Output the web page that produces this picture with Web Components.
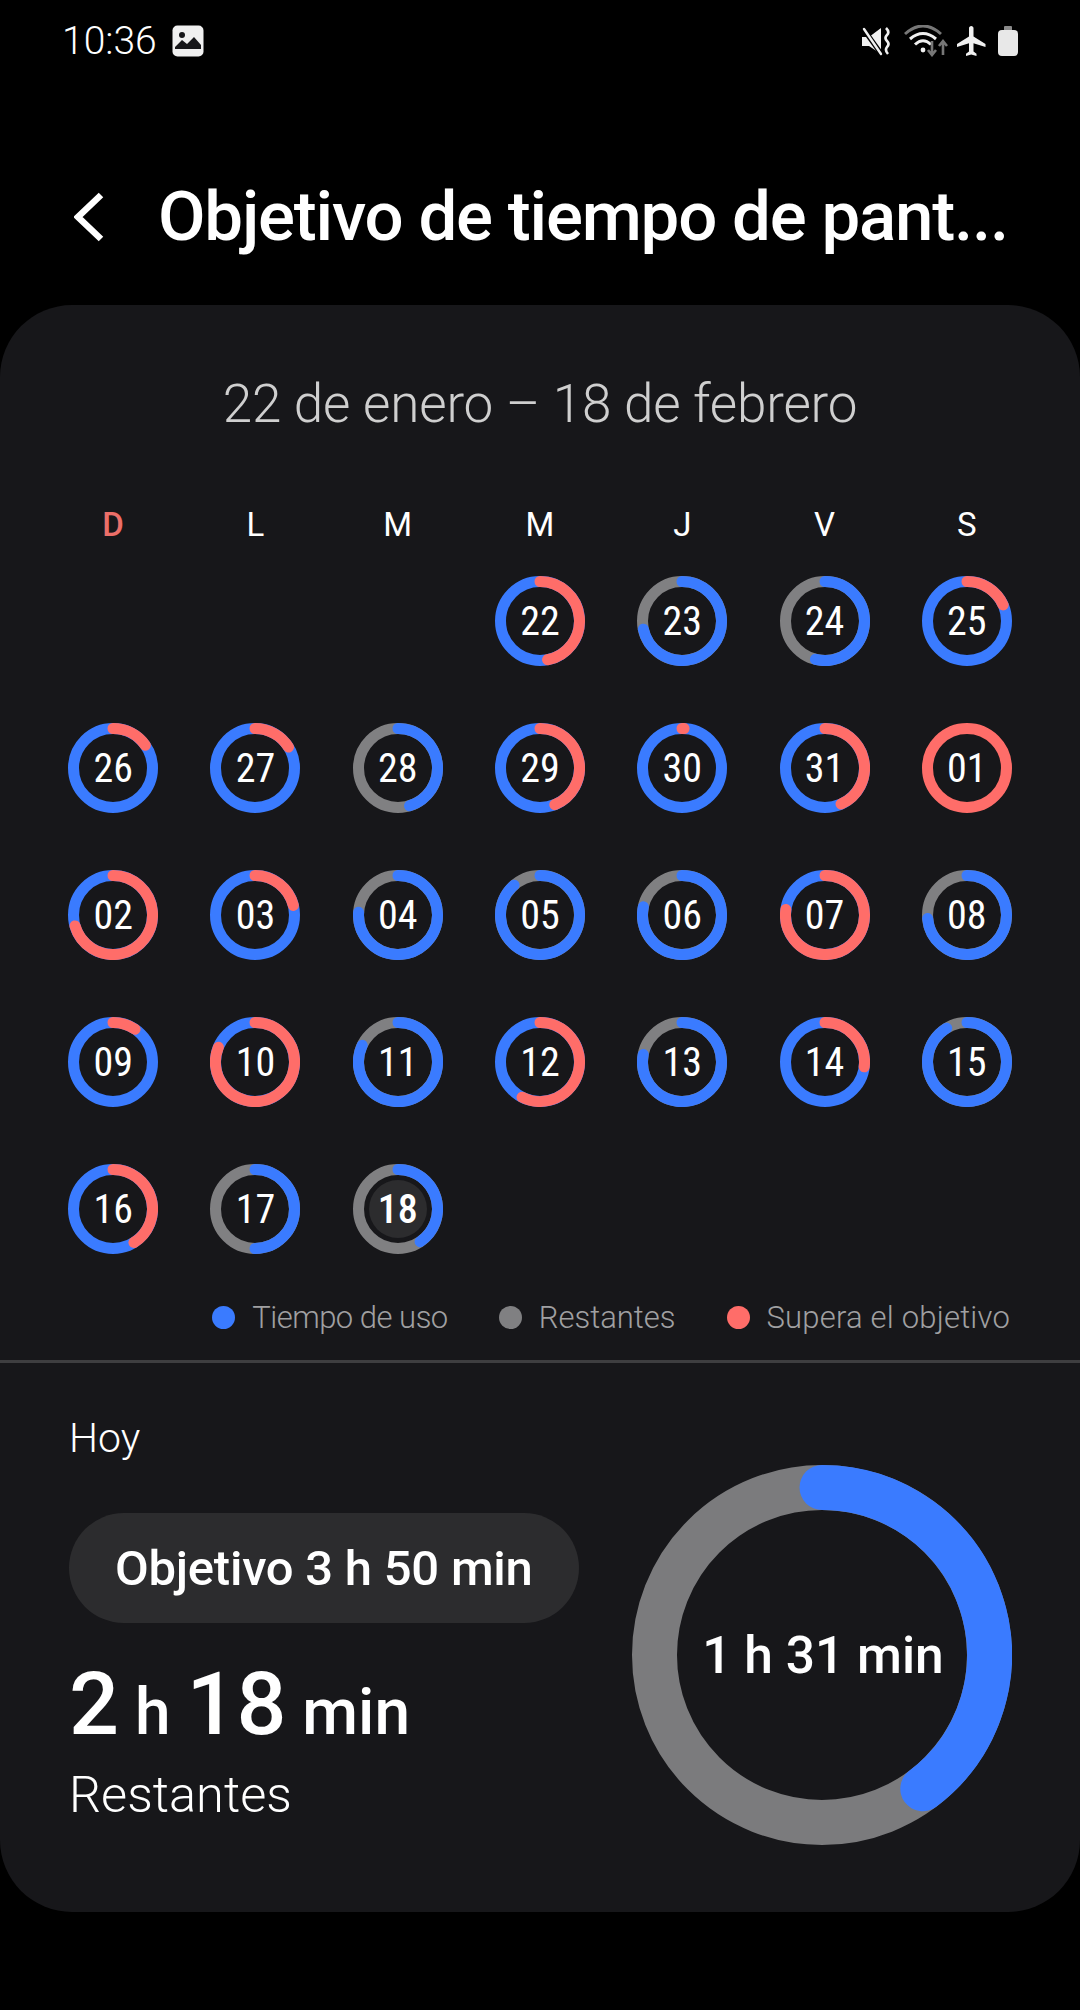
<!doctype html>
<html lang="es">
<head>
<meta charset="utf-8">
<title>Objetivo de tiempo de pantalla</title>
<style>
	html, body {
		margin: 0;
		background: #000;
		color: #fff;
		font-family: "Roboto", "Liberation Sans", sans-serif;
	}
</style>
</head>
<body>
<status-bar></status-bar>
<app-header>Objetivo de tiempo de pant...</app-header>
<main-card>
	<goal-calendar range="22 de enero – 18 de febrero"></goal-calendar>
	<ring-legend>
		<legend-item color="#3a7bff" style="letter-spacing:-0.5px">Tiempo de uso</legend-item>
		<legend-item color="#808082" style="letter-spacing:0">Restantes</legend-item>
		<legend-item color="#ff6d69">Supera el objetivo</legend-item>
	</ring-legend>
	<today-summary goal="Objetivo 3 h 50 min" used="1 h 31 min" end="143"></today-summary>
</main-card>

<script>
const BLUE = '#3a7bff';
const RED = '#ff6d69';
const GRAY = '#808082';

// Clockwise arc from the top of a circle, angles in degrees
function arcPath(cx, cy, r, end) {
	let a = end * Math.PI / 180;
	let x = cx + r * Math.sin(a);
	let y = cy - r * Math.cos(a);
	let large = end > 180 ? 1 : 0;
	return `M ${cx} ${cy - r} A ${r} ${r} 0 ${large} 1 ${x.toFixed(2)} ${y.toFixed(2)}`;
}

class StatusBar extends HTMLElement {
	constructor() {
		super();
		this.attachShadow({mode: 'open'});
		this.shadowRoot.innerHTML = `
			<style>
				:host {
					display: flex;
					align-items: center;
					height: 82px;
					padding: 0 62px;
				}
				.time {
					font-size: 39px;
					font-weight: 300;
					line-height: 1;
					margin-right: 15px;
				}
				.right {
					margin-left: auto;
					display: flex;
					align-items: center;
				}
				svg { display: block; }
			</style>
			<span class="time">10:36</span>
			<svg width="32" height="32" viewBox="0 0 32 32">
				<rect x="0.5" y="0.5" width="31" height="31" rx="5" fill="#f0f0f0"/>
				<circle cx="10" cy="10" r="3" fill="#17171a"/>
				<path d="M3 22 L10 15 L15 19 L22 12 L29 20 L29 24 L3 24 Z" fill="#17171a"/>
			</svg>
			<div class="right">
				<svg width="30" height="30" viewBox="0 0 30 30" style="margin-right:13px">
					<path d="M1 11 H8 L20 2 V28 L8 20 H1 Z" fill="#f0f0f0"/>
					<path d="M1 1 L21 29" stroke="#000" stroke-width="5"/>
					<path d="M3 3 L20 28" stroke="#f0f0f0" stroke-width="2.4" stroke-linecap="round"/>
					<path d="M25 2 q4 4 1 7 q-3 3 0 6 q3 3 0 6 q-2.5 3 1 7" fill="none" stroke="#f0f0f0" stroke-width="2.6"/>
				</svg>
				<svg width="46" height="32" viewBox="0 0 46 32" style="margin-right:7px">
					<path d="M1 9 Q19 -7 37 9" fill="none" stroke="#777" stroke-width="3"/>
					<path d="M6 14 Q19 3 32 14" fill="none" stroke="#f0f0f0" stroke-width="3"/>
					<path d="M11 19.5 Q19 12 27 19.5" fill="none" stroke="#f0f0f0" stroke-width="3"/>
					<circle cx="19" cy="25" r="2.4" fill="#f0f0f0"/>
					<path d="M28 16 V29 M24 25 L28 30 L32 25" fill="none" stroke="#777" stroke-width="2.6"/>
					<path d="M39 30 V17 M35 21 L39 16 L43 21" fill="none" stroke="#777" stroke-width="2.6"/>
				</svg>
				<svg width="30" height="30" viewBox="2 2 20 20" style="margin-right:11px">
					<path fill="#f0f0f0" d="M21 16v-2l-8-5V3.5c0-.83-.67-1.5-1.5-1.5S10 2.67 10 3.5V9l-8 5v2l8-2.5V19l-2 1.5V22l3.5-1 3.5 1v-1.5L13 19v-5.5l8 2.5z"/>
				</svg>
				<svg width="20" height="30" viewBox="0 0 20 30">
					<rect x="6" y="0" width="8" height="5" rx="1" fill="#8a8a8a"/>
					<rect x="0" y="4" width="20" height="26" rx="4" fill="#e8e8e8"/>
				</svg>
			</div>
		`;
	}
}

class AppHeader extends HTMLElement {
	constructor() {
		super();
		this.attachShadow({mode: 'open'});
		this.shadowRoot.innerHTML = `
			<style>
				:host {
					display: flex;
					align-items: center;
					height: 223px;
					box-sizing: border-box;
					padding: 46px 0 0 74px;
				}
				svg { display: block; margin-right: 52px; }
				.title {
					font-size: 69px;
					font-weight: 500;
					line-height: 1;
					letter-spacing: -1.2px;
					white-space: nowrap;
				}
			</style>
			<svg width="32" height="50" viewBox="0 0 32 50">
				<path d="M27 3 L4 25 L27 47" fill="none" stroke="#fff" stroke-width="6.5"/>
			</svg>
			<span class="title"><slot></slot></span>
		`;
	}
}

class MainCard extends HTMLElement {
	constructor() {
		super();
		this.attachShadow({mode: 'open'});
		this.shadowRoot.innerHTML = `
			<style>
				:host {
					display: block;
					height: 1607px;
					background: #17171a;
					border-radius: 72px;
					overflow: hidden;
				}
			</style>
			<slot></slot>
		`;
	}
}

class DayRing extends HTMLElement {
	constructor() {
		super();
		this.attachShadow({mode: 'open'});
	}

	connectedCallback() {
		let end = +this.getAttribute('end');
		let over = this.hasAttribute('over');
		let today = this.hasAttribute('today');
		let base = over ? BLUE : GRAY;
		let top = over ? RED : BLUE;
		let ring = end >= 360
			? `<circle cx="45" cy="45" r="39.5" fill="none" stroke="${top}" stroke-width="11"/>`
			: `<circle cx="45" cy="45" r="39.5" fill="none" stroke="${base}" stroke-width="11"/>
			   <path d="${arcPath(45, 45, 39.5, end)}" fill="none" stroke="${top}" stroke-width="11" stroke-linecap="round"/>`;
		this.shadowRoot.innerHTML = `
			<style>
				:host {
					display: grid;
					place-items: center;
					height: 147px;
				}
				svg, span { grid-area: 1 / 1; }
				svg { display: block; }
				span {
					font-size: 40px;
					font-stretch: condensed;
					font-weight: ${today ? 500 : 400};
					line-height: 1;
					padding-top: 2px;
				}
			</style>
			<svg width="90" height="90" viewBox="0 0 90 90">
				${ring}
				${today ? '<circle cx="45" cy="45" r="29" fill="#2c2c2e"/>' : ''}
			</svg>
			<span>${this.getAttribute('day')}</span>
		`;
	}
}

class GoalCalendar extends HTMLElement {
	constructor() {
		super();
		this.attachShadow({mode: 'open'});
		// day, end angle of the top arc, over goal
		this._days = [
			['22', 169, 1], ['23', 258], ['24', 194], ['25', 66, 1],
			['26', 55, 1], ['27', 58, 1], ['28', 163], ['29', 158, 1], ['30', 3, 1], ['31', 156, 1], ['01', 360, 1],
			['02', 254, 1], ['03', 76, 1], ['04', 274], ['05', 319], ['06', 282], ['07', 278, 1], ['08', 265],
			['09', 34, 1], ['10', 292, 1], ['11', 295], ['12', 207, 1], ['13', 281], ['14', 97, 1], ['15', 329],
			['16', 148, 1], ['17', 180], ['18', 146]
		];
	}

	connectedCallback() {
		let weekdays = ['D', 'L', 'M', 'M', 'J', 'V', 'S'];
		let head = weekdays.map((d, i) => `<span class="${i === 0 ? 'sun' : ''}">${d}</span>`).join('');
		let cells = this._days.map((d, i) => `<day-ring day="${d[0]}" end="${d[1]}" ${d[2] ? 'over' : ''} ${d[0] === '18' ? 'today' : ''} ${i === 0 ? 'style="grid-column-start:4"' : ''}></day-ring>`).join('');
		this.shadowRoot.innerHTML = `
			<style>
				:host {
					display: block;
					padding: 64px 42px 0;
				}
				.range {
					height: 70px;
					line-height: 70px;
					font-size: 53px;
					font-weight: 300;
					text-align: center;
					color: #cfcfcf;
					letter-spacing: -0.2px;
					margin-bottom: 64px;
				}
				.week, .days {
					display: grid;
					grid-template-columns: repeat(7, 1fr);
				}
				.week span {
					height: 44px;
					line-height: 44px;
					font-size: 33px;
					font-weight: 400;
					text-align: center;
				}
				.week .sun { color: #ec6f69; font-weight: 500; }
			</style>
			<div class="range">${this.getAttribute('range')}</div>
			<div class="week">${head}</div>
			<div class="days">${cells}</div>
		`;
	}
}

class RingLegend extends HTMLElement {
	constructor() {
		super();
		this.attachShadow({mode: 'open'});
		this.shadowRoot.innerHTML = `
			<style>
				:host {
					display: flex;
					justify-content: flex-end;
					gap: 51px;
					height: 46px;
					margin-top: 12px;
					padding: 0 70px 20px 0;
					border-bottom: 3px solid #3e3e40;
				}
			</style>
			<slot></slot>
		`;
	}
}

class LegendItem extends HTMLElement {
	constructor() {
		super();
		this.attachShadow({mode: 'open'});
		this.shadowRoot.innerHTML = `
			<style>
				:host {
					display: flex;
					align-items: center;
					gap: 17px;
					font-size: 31px;
					font-weight: 300;
					letter-spacing: 0.2px;
					color: #a0a0a2;
					white-space: nowrap;
				}
				i {
					width: 23px;
					height: 23px;
					border-radius: 50%;
					background: ${this.getAttribute('color')};
				}
			</style>
			<i></i><slot></slot>
		`;
	}
}

class TodaySummary extends HTMLElement {
	constructor() {
		super();
		this.attachShadow({mode: 'open'});
	}

	connectedCallback() {
		let end = this.getAttribute('end');
		this.shadowRoot.innerHTML = `
			<style>
				:host {
					display: flex;
					justify-content: space-between;
					padding: 50px 68px 0 69px;
				}
				.today {
					height: 50px;
					line-height: 50px;
					font-size: 41px;
					font-weight: 300;
					margin-bottom: 50px;
				}
				.pill {
					display: inline-flex;
					align-items: center;
					height: 110px;
					padding: 0 46px;
					border-radius: 55px;
					background: #2c2c2e;
					font-size: 49px;
					font-weight: 500;
					letter-spacing: -0.25px;
					white-space: nowrap;
				}
				.left { display: flex; flex-direction: column; align-items: flex-start; }
				.value {
					margin-top: 31px;
					height: 100px;
					line-height: 100px;
					font-size: 64px;
					font-weight: 500;
					white-space: nowrap;
				}
				.value b { font-size: 88px; font-weight: 500; }
				.rest {
					margin-top: 11px;
					height: 60px;
					line-height: 60px;
					font-size: 50.5px;
					font-weight: 300;
				}
				.ring {
					display: grid;
					place-items: center;
					margin-top: 52px;
					width: 380px;
					height: 380px;
				}
				.ring svg, .ring span { grid-area: 1 / 1; }
				.ring span {
					font-size: 51.5px;
					font-weight: 500;
					white-space: nowrap;
					padding-left: 2px;
				}
			</style>
			<div class="left">
				<div class="today">Hoy</div>
				<div class="pill">${this.getAttribute('goal')}</div>
				<div class="value"><b>2</b> h <b>18</b> min</div>
				<div class="rest">Restantes</div>
			</div>
			<div class="ring">
				<svg width="380" height="380" viewBox="0 0 380 380">
					<circle cx="190" cy="190" r="167.5" fill="none" stroke="#7b7b7d" stroke-width="45"/>
					<path d="${arcPath(190, 190, 167.5, +end)}" fill="none" stroke="${BLUE}" stroke-width="45" stroke-linecap="round"/>
				</svg>
				<span>${this.getAttribute('used')}</span>
			</div>
		`;
	}
}

customElements.define('status-bar', StatusBar);
customElements.define('app-header', AppHeader);
customElements.define('main-card', MainCard);
customElements.define('day-ring', DayRing);
customElements.define('goal-calendar', GoalCalendar);
customElements.define('ring-legend', RingLegend);
customElements.define('legend-item', LegendItem);
customElements.define('today-summary', TodaySummary);
</script>
</body>
</html>
